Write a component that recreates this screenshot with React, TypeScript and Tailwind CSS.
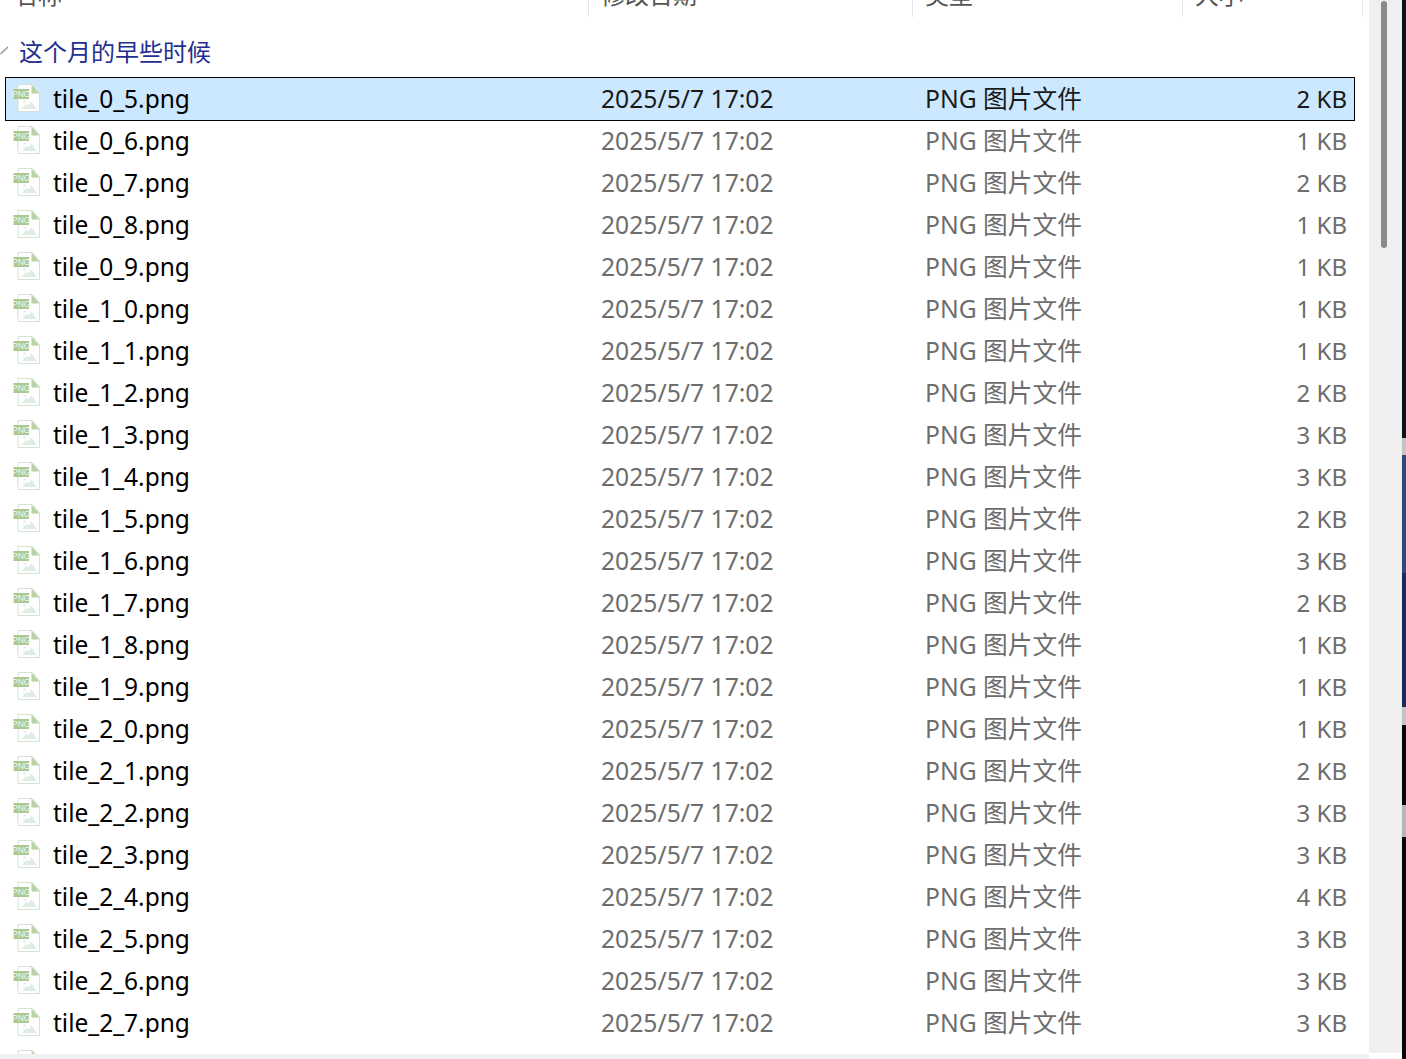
const rows: [string, number][] = [
  ["tile_0_5.png", 2],
  ["tile_0_6.png", 1],
  ["tile_0_7.png", 2],
  ["tile_0_8.png", 1],
  ["tile_0_9.png", 1],
  ["tile_1_0.png", 1],
  ["tile_1_1.png", 1],
  ["tile_1_2.png", 2],
  ["tile_1_3.png", 3],
  ["tile_1_4.png", 3],
  ["tile_1_5.png", 2],
  ["tile_1_6.png", 3],
  ["tile_1_7.png", 2],
  ["tile_1_8.png", 1],
  ["tile_1_9.png", 1],
  ["tile_2_0.png", 1],
  ["tile_2_1.png", 2],
  ["tile_2_2.png", 3],
  ["tile_2_3.png", 3],
  ["tile_2_4.png", 4],
  ["tile_2_5.png", 3],
  ["tile_2_6.png", 3],
  ["tile_2_7.png", 3],
]

function PngIcon() {
  return (
    <svg width="28" height="28" viewBox="0 0 28 28" className="-mt-[2px] shrink-0">
      <path d="M5 0.5h14.5l7 8v19h-21.500z" fill="#fdfefd" stroke="#d6e2d2" />
      <path d="M18.500 0.500v9h8z" fill="#b7d2a6" />
      <path d="M9 25l4-5 2.500 1.500 3-4 5.500 7.500z" fill="#deece6" />
      <circle cx="11.500" cy="17.500" r="1.500" fill="#e8f1ec" />
      <rect x="0.500" y="5" width="15.500" height="10" fill="#a9c98f" />
      <text x="8.200" y="13" textAnchor="middle" fontSize="8.500" fill="#f4f9ef" className="font-['Liberation_Sans',sans-serif]">
        PNG
      </text>
    </svg>
  )
}

export default function App() {
  return (
    <div className="flex h-[1059px] w-[1406px] overflow-hidden bg-white font-['Noto_Sans','Noto_Sans_CJK_SC',sans-serif] text-[24.7px]">
      <div className="flex w-[1369px] shrink-0 flex-col">
        <div className="h-[1054px] overflow-hidden">
          <div className="flex h-[17px] text-[24px] leading-[28px] text-[#555]">
            <div className="-mt-[19px] w-[588px] pl-[14px]">名称</div>
            <div className="-mt-[19px] w-[324px] border-l border-[#e5e5e5] pl-[12px]">修改日期</div>
            <div className="-mt-[19px] w-[270px] border-l border-[#e5e5e5] pl-[12px]">类型</div>
            <div className="-mt-[19px] w-[180px] border-l border-[#e5e5e5] pl-[12px]">大小</div>
            <div className="border-l border-[#e5e5e5]" />
          </div>
          <div className="flex h-[61px] items-center pt-[9px]">
            <svg width="9" height="9" viewBox="0 0 9 9" className="mt-[-3px] shrink-0">
              <path d="M0.500 8L8 1" fill="none" stroke="#8f8f8f" strokeWidth="1.200" />
            </svg>
            <span className="ml-[10px] text-[24px] text-[#1f3090]">这个月的早些时候</span>
          </div>
          <div className="pl-[6px] pr-[15px]">
            {rows.map(([name, size], i) => (
              <div
                key={name}
                className={
                  i === 0
                    ? "flex h-[42px] items-center bg-[#cce8ff] text-[#1a1a1a] outline outline-1 outline-black"
                    : "flex h-[42px] items-center text-[#6d6d6d]"
                }
              >
                <div className="ml-[7px] flex w-[40px] shrink-0">
                  <PngIcon />
                </div>
                <div className="w-[548px] shrink-0 text-[24.5px] text-black">{name}</div>
                <div className="w-[324px] shrink-0">2025/5/7 17:02</div>
                <div className="w-[280px] shrink-0">PNG 图片文件</div>
                <div className="w-[142px] shrink-0 text-right text-[24px]">{size} KB</div>
              </div>
            ))}
            {/* next row is scrolled out, only the icon top peeks in */}
            <div className="ml-[7px] flex h-[42px] items-center">
              <PngIcon />
            </div>
          </div>
        </div>
        <div className="h-[5px] bg-[#f0f0f0]" />
      </div>
      <div className="w-[33px] shrink-0">
        <div className="flex h-[1053px] justify-center bg-[#efefef] pr-[3px] pt-[1px]">
          <div className="h-[247px] w-[6px] rounded-full bg-[#8a8a8a]" />
        </div>
      </div>
      <div className="flex w-[4px] shrink-0 flex-col bg-[#080808]">
        <div className="h-[438px] bg-[#0b1220]" />
        <div className="h-[17px] bg-[#c4c4c4]" />
        <div className="h-[118px] bg-[#2f4a7c]" />
        <div className="h-[134px] bg-[#1a2a5c]" />
        <div className="h-[18px] bg-[#c4c4c4]" />
        <div className="h-[80px]" />
        <div className="h-[32px] bg-[#b5b5b5]" />
      </div>
    </div>
  )
}
